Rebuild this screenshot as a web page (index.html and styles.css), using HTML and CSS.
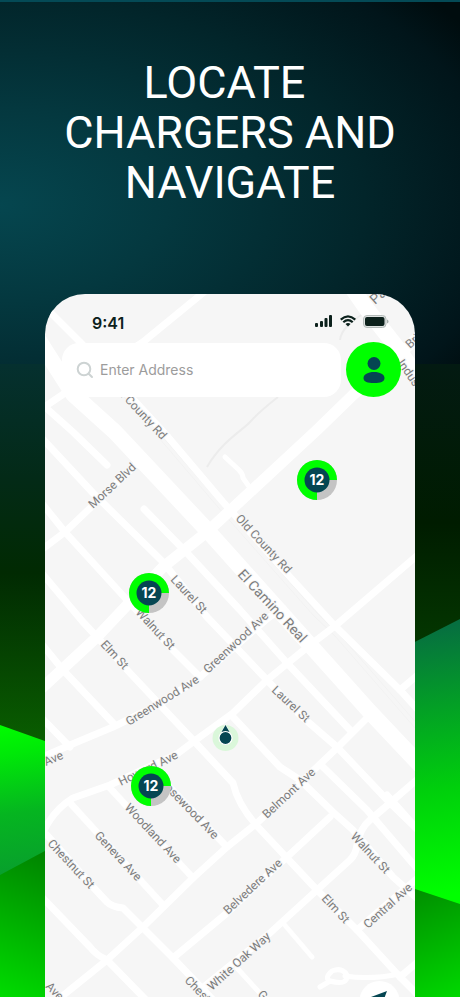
FILE: index.html
```html
<!DOCTYPE html>
<html lang="en">
<head>
<meta charset="utf-8">
<meta name="viewport" content="width=device-width, initial-scale=1">
<title>Locate chargers and navigate</title>
<link rel="stylesheet" href="styles.css">
</head>
<body>
<div class="page">
  <svg class="backdrop" viewBox="0 0 460 997" preserveAspectRatio="none" aria-hidden="true">
    <defs>
      <radialGradient id="glow" gradientUnits="userSpaceOnUse" cx="0" cy="0" r="1" gradientTransform="translate(0 205) scale(560 320)">
        <stop offset="0" stop-color="#05464f"/><stop offset=".3" stop-color="#04383f"/><stop offset=".65" stop-color="#02252a"/><stop offset=".9" stop-color="#01151a"/><stop offset="1" stop-color="#000c0e"/>
      </radialGradient>
      <linearGradient id="forest" x1="0" y1="0" x2="0" y2="1">
        <stop offset="0" stop-color="#05302f"/><stop offset=".18" stop-color="#032a17"/><stop offset=".33" stop-color="#012a02"/><stop offset=".62" stop-color="#0a6200"/><stop offset="1" stop-color="#0a6200"/>
      </linearGradient>
      <linearGradient id="night" x1="0" y1="0" x2="0" y2="1">
        <stop offset="0" stop-color="#031a12"/><stop offset=".25" stop-color="#001c00"/><stop offset=".45" stop-color="#043800"/><stop offset="1" stop-color="#043800"/>
      </linearGradient>
      <linearGradient id="leafL" gradientUnits="userSpaceOnUse" x1="10" y1="725" x2="30" y2="870">
        <stop offset="0" stop-color="#00fc00"/><stop offset=".2" stop-color="#00e808"/><stop offset=".6" stop-color="#05b520"/><stop offset="1" stop-color="#08a02c"/>
      </linearGradient>
      <linearGradient id="baseL" gradientUnits="userSpaceOnUse" x1="60" y1="850" x2="0" y2="997">
        <stop offset="0" stop-color="#007f00"/><stop offset="1" stop-color="#00dc00"/>
      </linearGradient>
      <linearGradient id="leafR" gradientUnits="userSpaceOnUse" x1="415" y1="630" x2="450" y2="895">
        <stop offset="0" stop-color="#066f40"/><stop offset=".3" stop-color="#03a025"/><stop offset=".6" stop-color="#00cf0c"/><stop offset="1" stop-color="#00ff00"/>
      </linearGradient>
      <linearGradient id="baseR" gradientUnits="userSpaceOnUse" x1="415" y1="890" x2="460" y2="997">
        <stop offset="0" stop-color="#008f00"/><stop offset="1" stop-color="#00d800"/>
      </linearGradient>
    </defs>
    <rect width="460" height="364" fill="url(#glow)"/>
    <rect width="460" height="2" fill="#044a56"/>
    <rect y="364" width="230" height="633" fill="url(#forest)"/>
    <rect x="230" y="364" width="230" height="633" fill="url(#night)"/>
    <path d="M0 725L230 807V997H0Z" fill="url(#leafL)"/>
    <path d="M0 875L230 752V997H0Z" fill="url(#baseL)"/>
    <path d="M230 736L460 619V997H230Z" fill="url(#leafR)"/>
    <path d="M230 827L415 889L460 904V997H230Z" fill="url(#baseR)"/>
  </svg>

  <h1 class="headline">LOCATE&nbsp;<br>CHARGERS AND<br>NAVIGATE</h1>

  <main class="phone">
    <svg class="map" viewBox="45 294 370 703" preserveAspectRatio="xMidYMin slice" role="img" aria-label="Street map with chargers">
      <g class="rail">
        <path d="M80 352L125 398L223 513L313 615L335 636L415 728"/>
        <path d="M84 352L129 398L227 511L317 613L339 634L419 726"/>
      </g>
      <g class="river">
        <path d="M278 397C264 408 257 414 250 422S222 441 207 467"/>
        <path d="M366 312C350 322 341 330 340 340"/>
      </g>
      <g class="road road-main">
        <path d="M40 342L73 394L115 432L207 530L310 645L370 712L420 765"/>
        <path d="M350 285L366 308L395 345L418 377"/>
      </g>
      <g class="road road-wide">
        <path d="M40 690L97 637L163 567L207 532L317 430L353 395L403 351L420 335"/>
        <path d="M352 288L372 318"/>
      </g>
      <g class="road">
        <path d="M40 302L53 315L80 342L168 437L223 502L290 577L335 626L400 690L420 712"/>
        <path d="M40 410L65 393L143 342L204 292"/>
        <path d="M44 406L73 432L107 465"/>
        <path d="M40 436L93 493L163 562L207 617L267 680L300 715L337 747L390 803L420 832"/>
        <path d="M144 509L187 553L240 610L287 663L350 730"/>
        <path d="M40 501L65 532L127 600L173 650L200 677"/>
        <path d="M233 717L280 767L300 780L333 812L353 830L393 877L420 901"/>
        <path d="M40 571L83 622L97 637L130 673L193 740L233 783Q238 805 257 826L317 890L357 930L400 977L420 997"/>
        <path d="M40 642L63 670L113 723"/>
        <path d="M40 716L70 747"/>
        <path d="M40 551L65 532L87 511L137 464"/>
        <path d="M40 758L70 745L113 727L160 704L200 677L268 618L283 608"/>
        <path d="M40 840Q50 812 73 798L110 785L177 754L193 742L233 713L267 680L310 645L335 626L420 553"/>
        <path d="M55 1002L107 960L143 927L193 878L227 847L257 823L317 767L337 748L370 715"/>
        <path d="M400 690L420 673"/>
        <path d="M173 958L227 913L287 857L330 817"/>
        <path d="M200 990L270 933L317 890L350 860Q356 854 357 845Q360 828 370 820L390 803L420 777"/>
        <path d="M323 767L367 810L420 872"/>
        <path d="M387 795L420 832"/>
        <path d="M357 930L420 876"/>
        <path d="M47 835L93 887L107 902Q112 907 123 908L143 928L173 958L215 1002"/>
        <path d="M40 895L90 947Q96 955 107 960L148 1002"/>
        <path d="M72 805L163 905"/>
        <path d="M110 788L193 878"/>
        <path d="M155 772L227 847"/>
        <path d="M400 977L420 960"/>
      </g>
      <g class="road road-thin">
        <path d="M225 457L239 470Q243 474 243 478L248 485"/>
        <path d="M283 923L312 957"/>
        <path d="M237 968L268 1002"/>
        <path d="M320 987L330 981Q348 986 347 975Q342 967 332 971Q324 978 330 981M345 976Q370 980 400 974"/>
      </g>
      <g class="street">
        <text transform="translate(375 305) rotate(-42)" class="street-big">Pa</text>
        <text transform="translate(410 349) rotate(-42)">Bri</text>
        <text transform="translate(397 363) rotate(55)">Indus</text>
        <text transform="translate(110 385) rotate(47)">Old County Rd</text>
        <text transform="translate(93 509) rotate(-43)">Morse Blvd</text>
        <text transform="translate(235 519) rotate(47)">Old County Rd</text>
        <text transform="translate(237 575) rotate(47)" class="street-big">El Camino Real</text>
        <text transform="translate(170 580) rotate(47)">Laurel St</text>
        <text transform="translate(135 613) rotate(47)">Walnut St</text>
        <text transform="translate(100 645) rotate(47)">Elm St</text>
        <text transform="translate(208 674) rotate(-43)">Greenwood Ave</text>
        <text transform="translate(129 726) rotate(-32)">Greenwood Ave</text>
        <text transform="translate(271 691) rotate(43)">Laurel St</text>
        <text transform="translate(46 766) rotate(-23)">Ave</text>
        <text transform="translate(121 786) rotate(-26)">Howard Ave</text>
        <text transform="translate(159 783) rotate(46)">Rosewood Ave</text>
        <text transform="translate(267 819) rotate(-43)">Belmont Ave</text>
        <text transform="translate(124 808) rotate(47)">Woodland Ave</text>
        <text transform="translate(94 836) rotate(47)">Geneva Ave</text>
        <text transform="translate(47 844) rotate(47)">Chestnut St</text>
        <text transform="translate(228 915) rotate(-43)">Belvedere Ave</text>
        <text transform="translate(350 837) rotate(47)">Walnut St</text>
        <text transform="translate(321 899) rotate(47)">Elm St</text>
        <text transform="translate(368 929) rotate(-42)">Central Ave</text>
        <text transform="translate(212 991) rotate(-42)">White Oak Way</text>
        <text transform="translate(184 981) rotate(46)">Chest</text>
        <text transform="translate(45 987) rotate(46)">Ave</text>
        <text transform="translate(257 995) rotate(46)">G</text>
      </g>
      <g transform="translate(317 480)">
        <circle r="20" fill="#c4c4c4"/><path d="M0 0H20A20 20 0 1 0 0 20Z" fill="#00ff00"/><circle r="12.500" fill="#054652"/><text class="count" y="5">12</text>
      </g>
      <g transform="translate(149 593)">
        <circle r="20" fill="#c4c4c4"/><path d="M0 0H20A20 20 0 1 0 0 20Z" fill="#00ff00"/><circle r="12.500" fill="#054652"/><text class="count" y="5">12</text>
      </g>
      <g transform="translate(151 786)">
        <circle r="20" fill="#c4c4c4"/><path d="M0 0H20A20 20 0 1 0 0 20Z" fill="#00ff00"/><circle r="12.500" fill="#054652"/><text class="count" y="5">12</text>
      </g>
      <g transform="translate(225.500 738)">
        <circle r="13" fill="#daf7da"/>
        <path d="M0-13L4-6H-4Z" fill="#054652" stroke="#fff" stroke-width="1" paint-order="stroke"/>
        <circle r="6.500" fill="#054652" stroke="#fff" stroke-width="1.200"/>
      </g>
      <circle cx="379.500" cy="1001" r="20" fill="#fff"/>
      <path d="M387 991L371 997L379 999L381 1007Z" fill="#054652"/>
    </svg>

    <div class="status">
      <span class="time">9:41</span>
      <span class="indicators">
        <svg width="18" height="12" viewBox="0 0 18 12" aria-hidden="true"><g fill="#0c211c"><rect x="0" y="8" width="3" height="4" rx="1"/><rect x="5" y="6" width="3" height="6" rx="1"/><rect x="9.500" y="3" width="3" height="9" rx="1"/><rect x="14" y="0" width="3" height="12" rx="1"/></g></svg>
        <svg width="16" height="12" viewBox="0 0 16 12" aria-hidden="true"><g fill="none" stroke="#0c211c" stroke-width="2.200"><path d="M.7 4.600Q8-2 15.300 4.600"/><path d="M3.300 7.300Q8 3 12.700 7.300"/></g><path d="M5.500 9Q8 7 10.500 9L8 11.600Z" fill="#0c211c"/></svg>
        <svg width="26" height="13" viewBox="0 0 26 13" aria-hidden="true"><rect x=".5" y=".5" width="22.500" height="12" rx="3.500" fill="#dfe3e2" stroke="#b5bcba"/><rect x="2" y="2" width="19.500" height="9" rx="2" fill="#0c211c"/><path d="M24 4.500Q25.500 5 25.500 6.500T24 8.500Z" fill="#a8b0ae"/></svg>
      </span>
    </div>

    <div class="toolbar">
      <label class="search">
        <svg width="18" height="18" viewBox="0 0 18 18" fill="none" stroke="#cdd3d3" stroke-width="2" stroke-linecap="round" aria-hidden="true"><circle cx="8" cy="8" r="6.300"/><path d="M12.700 12.700L16 16"/></svg>
        <input type="text" placeholder="Enter Address" aria-label="Enter Address">
      </label>
      <button class="profile" type="button" aria-label="Profile">
        <svg width="22" height="28" viewBox="0 0 22 28" fill="#054652" aria-hidden="true"><circle cx="11" cy="7.500" r="6.500"/><path d="M11 16C17 16 21.500 18.500 21.500 22C21.500 25.800 17.500 27 11 27S.5 25.800 .5 22C.5 18.500 5 16 11 16Z"/></svg>
      </button>
    </div>
  </main>
</div>
</body>
</html>
```
FILE: styles.css
```css
* {
  box-sizing: border-box;
}

body {
  margin: 0;
  background: #02262c;
  font-family: Inter, "Liberation Sans", sans-serif;
}

.page {
  position: relative;
  display: flex;
  flex-direction: column;
  min-height: 100vh;
  overflow: hidden;
}

.backdrop {
  position: absolute;
  inset: 0;
  width: 100%;
  height: 100%;
}

.headline {
  position: relative;
  margin: 0;
  padding: 58px 16px 86px;
  color: #fff;
  font-family: Roboto, sans-serif;
  font-size: 45px;
  font-weight: 400;
  line-height: 50px;
  text-align: center;
}

.phone {
  position: relative;
  flex: 1;
  margin: 0 45px;
  overflow: hidden;
  border-radius: 40px 40px 0 0;
  background: #f6f6f6;
}

.map {
  position: absolute;
  inset: 0;
  width: 100%;
  height: 100%;
}

.road {
  fill: none;
  stroke: #fff;
  stroke-width: 7px;
  stroke-linecap: round;
  stroke-linejoin: round;
}

.road-main {
  stroke-width: 16px;
}

.road-wide {
  stroke-width: 11px;
}

.road-thin {
  stroke-width: 5px;
}

.rail {
  fill: none;
  stroke: #f2f2f2;
}

.river {
  fill: none;
  stroke: #ececec;
  stroke-width: 2px;
}

.street {
  fill: #7c7c7c;
  stroke: #f6f6f6;
  stroke-width: 2px;
  paint-order: stroke;
  font-family: Roboto, sans-serif;
  font-size: 12px;
  font-weight: 400;
}

.street-big {
  font-size: 14px;
}

.count {
  fill: #fff;
  font-size: 14px;
  font-weight: 700;
  text-anchor: middle;
}

.status {
  position: relative;
  display: flex;
  align-items: center;
  justify-content: space-between;
  height: 48px;
  padding: 9px 26px 0 47px;
}

.time {
  color: #0c211c;
  font-size: 16px;
  font-weight: 600;
}

.indicators {
  display: flex;
  align-items: center;
  gap: 7px;
  padding-bottom: 3px;
}

.toolbar {
  position: relative;
  display: flex;
  align-items: center;
  gap: 5px;
  padding: 0 14px 0 17px;
}

.search {
  display: flex;
  flex: 1;
  align-items: center;
  gap: 6px;
  min-width: 0;
  height: 54px;
  padding: 0 14px;
  border-radius: 17px;
  background: #fff;
}

.search input {
  flex: 1;
  min-width: 0;
  padding: 0;
  border: 0;
  outline: 0;
  background: none;
  color: #333;
  font: 400 14px Inter, sans-serif;
}

.search input::placeholder {
  color: #9c9c9c;
  opacity: 1;
}

.profile {
  display: grid;
  flex: none;
  place-items: center;
  width: 55px;
  height: 55px;
  padding: 0;
  border: 0;
  border-radius: 50%;
  background: #0f0;
}
```
